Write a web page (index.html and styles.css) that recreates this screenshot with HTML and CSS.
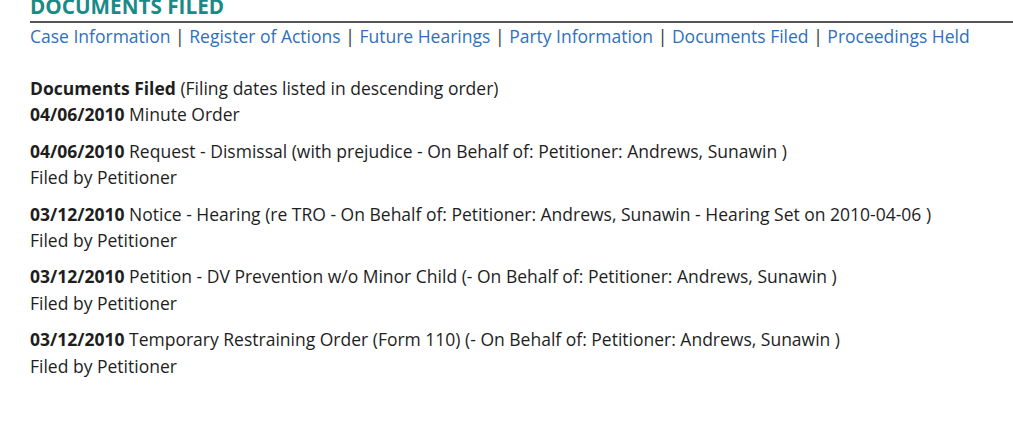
FILE: index.html
```html
<!DOCTYPE html>
<html>
<head>
<meta charset="utf-8">
<link rel="stylesheet" href="styles.css">
</head>
<body>
<div class="page">
  <h2 class="section-title">DOCUMENTS FILED</h2>
  <nav class="tabs">
    <a href="#">Case Information</a><span class="sep">|</span><a href="#">Register of Actions</a><span class="sep">|</span><a href="#">Future Hearings</a><span class="sep">|</span><a href="#">Party Information</a><span class="sep">|</span><a href="#">Documents Filed</a><span class="sep">|</span><a href="#">Proceedings Held</a>
  </nav>
  <div class="docs">
    <div class="intro"><b>Documents Filed</b> (Filing dates listed in descending order)</div>
    <div class="entry first"><b>04/06/2010</b> Minute Order</div>
    <div class="entry"><b>04/06/2010</b> Request - Dismissal (with prejudice - On Behalf of: Petitioner: Andrews, Sunawin )<br>Filed by Petitioner</div>
    <div class="entry"><b>03/12/2010</b> Notice - Hearing (re TRO - On Behalf of: Petitioner: Andrews, Sunawin - Hearing Set on 2010-04-06 )<br>Filed by Petitioner</div>
    <div class="entry"><b>03/12/2010</b> Petition - DV Prevention w/o Minor Child (- On Behalf of: Petitioner: Andrews, Sunawin )<br>Filed by Petitioner</div>
    <div class="entry"><b>03/12/2010</b> Temporary Restraining Order (Form 110) (- On Behalf of: Petitioner: Andrews, Sunawin )<br>Filed by Petitioner</div>
  </div>
</div>
</body>
</html>
```

FILE: styles.css
```css
html, body {
  margin: 0;
  padding: 0;
  background: #fff;
}
body {
  font-family: "Open Sans", "DejaVu Sans", sans-serif;
  font-size: 17.5px;
  color: #1e1e1e;
  overflow: hidden;
}
.page {
  padding-left: 30px;
}
.section-title {
  margin: -9px 0 0 0;
  font-size: 20.7px;
  font-weight: 700;
  line-height: 30px;
  color: #1a8a88;
  border-bottom: 2px solid #555;
}
.tabs {
  line-height: 26px;
  margin-top: 0;
  white-space: nowrap;
}
.tabs a {
  color: #2f6fc0;
  text-decoration: none;
}
.tabs .sep {
  color: #333;
  margin: 0 4.6px;
}
.docs {
  margin-top: 26px;
  line-height: 26.4px;
}
.docs b {
  font-weight: 700;
}
.entry {
  margin-top: 10px;
}
.entry.first {
  margin-top: 0;
}
```
